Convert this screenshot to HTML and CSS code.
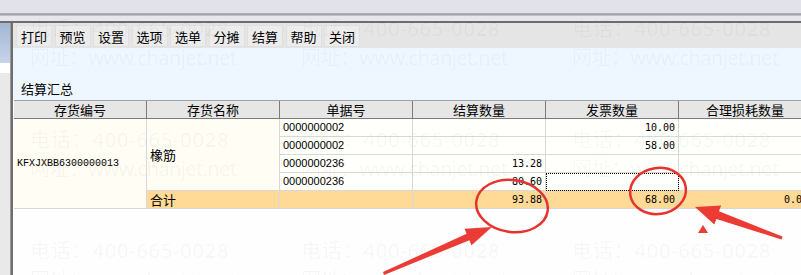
FILE: index.html
```html
<!doctype html>
<html lang="zh-CN">
<head>
	<meta charset="UTF-8" />
	<title>结算汇总</title>
<link rel="stylesheet" href="styles.css">
</head>
<body>
	<div class="topbar"></div>
	<div class="main">
		<div class="side"></div>
		<div class="win">
			<nav class="toolbar">
				<a href="javascript:;">打印</a>
				<a href="javascript:;">预览</a>
				<a href="javascript:;">设置</a>
				<a href="javascript:;">选项</a>
				<a href="javascript:;">选单</a>
				<a href="javascript:;">分摊</a>
				<a href="javascript:;">结算</a>
				<a href="javascript:;">帮助</a>
				<a href="javascript:;">关闭</a>
			</nav>
			<div class="pane"><span>结算汇总</span></div>
			<table class="grid">
				<colgroup>
					<col><col><col><col><col><col>
				</colgroup>
				<thead>
					<tr>
						<th>存货编号</th>
						<th>存货名称</th>
						<th>单据号</th>
						<th>结算数量</th>
						<th>发票数量</th>
						<th>合理损耗数量</th>
					</tr>
				</thead>
				<tbody>
					<tr>
						<td rowspan="5" class="code">KFXJXBB6300000013</td>
						<td rowspan="4" class="name">橡筋</td>
						<td class="doc">0000000002</td>
						<td class="num"></td>
						<td class="num">10.00</td>
						<td></td>
					</tr>
					<tr>
						<td class="doc">0000000002</td>
						<td class="num"></td>
						<td class="num">58.00</td>
						<td></td>
					</tr>
					<tr>
						<td class="doc">0000000236</td>
						<td class="num">13.28</td>
						<td class="num"></td>
						<td></td>
					</tr>
					<tr>
						<td class="doc">0000000236</td>
						<td class="num">80.60</td>
						<td class="num focus"></td>
						<td></td>
					</tr>
					<tr class="total">
						<td class="name">合计</td>
						<td></td>
						<td class="num">93.88</td>
						<td class="num">68.00</td>
						<td class="num">0.00</td>
					</tr>
				</tbody>
			</table>
		</div>
	</div>

	<!-- 水印 -->
	<div class="mark">
		<div><span class="tel">电话：400-665-0028</span><span class="web">网址：www.chanjet.net</span></div>
		<div><span class="tel">电话：400-665-0028</span><span class="web">网址：www.chanjet.net</span></div>
		<div><span class="tel">电话：400-665-0028</span><span class="web">网址：www.chanjet.net</span></div>
		<div><span class="tel">电话：400-665-0028</span><span class="web">网址：www.chanjet.net</span></div>
		<div><span class="tel">电话：400-665-0028</span><span class="web">网址：www.chanjet.net</span></div>
		<div><span class="tel">电话：400-665-0028</span><span class="web">网址：www.chanjet.net</span></div>
		<div><span class="tel">电话：400-665-0028</span><span class="web">网址：www.chanjet.net</span></div>
		<div><span class="tel">电话：400-665-0028</span><span class="web">网址：www.chanjet.net</span></div>
		<div><span class="tel">电话：400-665-0028</span><span class="web">网址：www.chanjet.net</span></div>
	</div>

	<!-- 红色标注 -->
	<svg class="ink" width="801" height="275" viewBox="0 0 801 275">
		<ellipse cx="512" cy="206" rx="36" ry="26" transform="rotate(8 512 206)" />
		<ellipse cx="658" cy="191" rx="28" ry="23" transform="rotate(-8 658 191)" />
		<polygon class="fill" points="492,227 471.5,245.3 469.4,240.2 384,275 383,272 466.6,233.8 464.5,228.7" />
		<polygon class="fill" points="695,207 721.1,205.6 719,211.3 782.5,236.6 781.5,239.4 716.4,218.9 714.3,224.6" />
		<polygon class="fill" points="698,233 703,225 708,233" />
	</svg>
</body>
</html>
```

FILE: styles.css
```css
*{
	margin: 0;
	padding: 0;
	box-sizing: border-box;
}
body{
	position: relative;
	width: 801px;
	height: 275px;
	overflow: hidden;
	background: #fefefe;
	font-family: "Noto Sans CJK SC", sans-serif;
	font-size: 13px;
	color: #000;
}
.topbar{
	height: 23px;
	background: linear-gradient(to bottom,
		#e2e2ea 0, #e2e2ea 13px,
		#b6b6be 13px, #9c9ca4 15px,
		#e6e6ec 16px, #e6e6ec 21px,
		#6c6c6c 21px, #6c6c6c 23px);
}
.main{
	display: flex;
	height: 252px;
}
.side{
	width: 11px;
	border-right: 1px solid #9a9a9a;
	background: linear-gradient(to bottom,
		#a2b6d4 0, #c6d5ea 40px,
		#fff 40px, #fff 50px,
		#e9e9e9 50px);
}
.win{
	flex: 1;
	overflow: hidden;
	border-left: 2px solid #6e6e6e;
	background: #fefefe;
}
.toolbar{
	display: flex;
	gap: 2.5px;
	height: 25px;
	padding: 2px 3px 0;
	background: #e5e5e5;
}
.toolbar a{
	display: block;
	width: 36px;
	height: 22px;
	line-height: 21px;
	text-align: center;
	color: #000;
	text-decoration: none;
	background: #ececec;
	border: 1px solid #e0e0e0;
}
.pane{
	display: flex;
	align-items: flex-end;
	height: 52px;
	padding: 0 0 3px 8px;
	background: #eef7ff;
	line-height: 17px;
}
.grid{
	width: 798px;
	margin-left: 1px;
	table-layout: fixed;
	border-collapse: separate;
	border-spacing: 0;
	border-top: 1px solid #a0a0a0;
}
.grid col{
	width: 133px;
}
.grid th{
	height: 18px;
	line-height: 17px;
	font-weight: normal;
	background: #e6e6e6;
	border-right: 1px solid #7c7c7c;
	border-bottom: 1px solid #7c7c7c;
}
.grid td{
	height: 18px;
	line-height: 17px;
	padding: 0 3px;
	white-space: nowrap;
	overflow: hidden;
	background: #fffffb;
	border-right: 1px solid #d8d8d8;
	border-bottom: 1px solid #d8d8d8;
}
.grid td.code{
	background: #fffdf4;
	font-family: "Liberation Mono", monospace;
	font-size: 10px;
}
.grid td.name{
	background: #fffdf4;
}
.grid td.doc{
	font-family: "Liberation Sans", sans-serif;
	font-size: 11px;
}
.grid td.num{
	text-align: right;
	font-family: "DejaVu Sans Mono", monospace;
	font-size: 10px;
}
.grid td.focus{
	outline: 1px dotted #000;
	outline-offset: -1px;
}
.grid tr.total td{
	background: #ffd996;
}
.mark{
	position: absolute;
	left: 0;
	top: 0;
	width: 801px;
	height: 275px;
	overflow: hidden;
	display: grid;
	grid-template-columns: repeat(3, 271px);
	grid-auto-rows: 111px;
	padding: 14px 0 0 30px;
	pointer-events: none;
}
.mark div{
	display: flex;
	flex-direction: column;
}
.mark span{
	font-family: "Noto Sans", "Noto Sans CJK SC", sans-serif;
	font-size: 20px;
	line-height: 29px;
	white-space: nowrap;
	color: rgba(0, 0, 0, 0.045);
}
.mark .tel{
	letter-spacing: 0.8px;
}
.mark .web{
	letter-spacing: -0.6px;
}
.ink{
	position: absolute;
	left: 0;
	top: 0;
}
.ink ellipse{
	fill: none;
	stroke: #e6332f;
	stroke-width: 2.5;
}
.ink .fill{
	fill: #ec3a35;
}
```
